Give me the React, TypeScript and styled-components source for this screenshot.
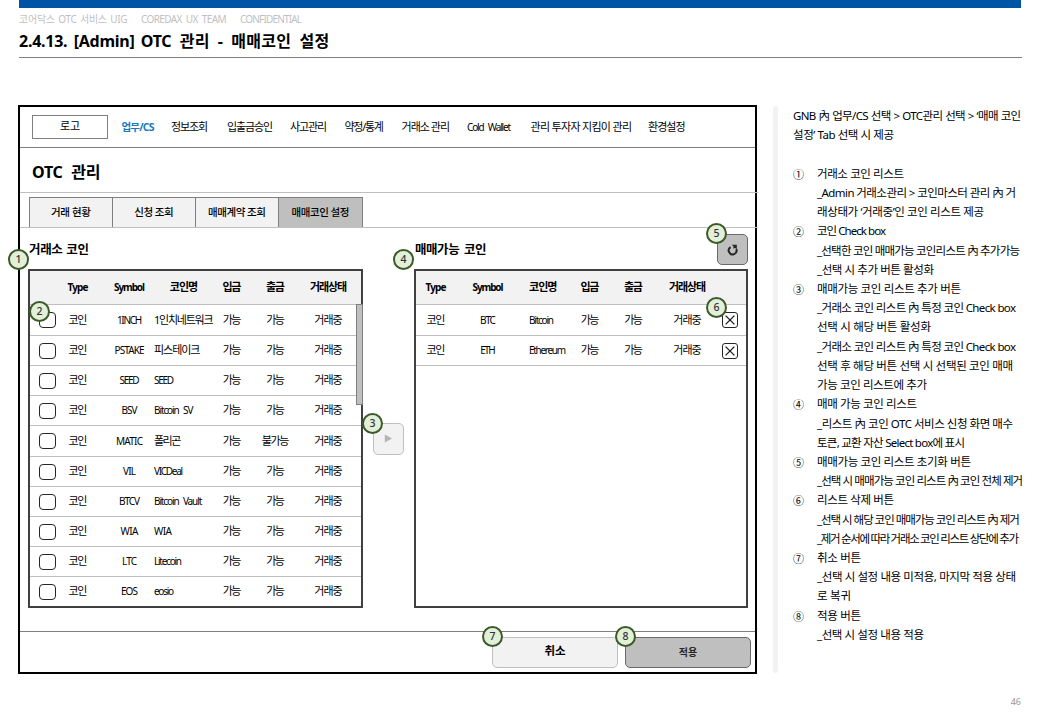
import React from "react";
import styled, { createGlobalStyle, css } from "styled-components";

const GlobalStyle = createGlobalStyle`
  * { box-sizing: border-box; }
  body {
    margin: 0;
    background: #fff;
    color: #000;
    font-family: "Noto Sans", "Noto Sans CJK KR", sans-serif;
    font-size: 11px;
  }
`;

const Slide = styled.div`
  width: 1040px;
  height: 720px;
  padding: 0 18px 0 19px;
  overflow: hidden;
  display: flex;
  flex-direction: column;
`;

const TopBar = styled.div`
  height: 8px;
  flex: none;
  width: 1002px;
  background: #0054a6;
`;

const Meta = styled.div`
  display: grid;
  grid-template-columns: 122px 99px 1fr;
  height: 21px;
  flex: none;
  line-height: 22px;
  font-size: 10px;
  color: #bfbfbf;
  white-space: nowrap;
`;

const Text = styled.span<{ $ls?: number; $ws?: number; $size?: number }>`
  letter-spacing: ${(p) => p.$ls ?? 0}px;
  word-spacing: ${(p) => p.$ws ?? 0}px;
  padding-right: ${(p) => Math.max(0, -(p.$ls ?? 0))}px;
  white-space: pre;
  ${(p) => p.$size && css`font-size: ${p.$size}px;`}
`;

const DocTitle = styled.h1`
  display: flex;
  margin: 0;
  height: 29px;
  flex: none;
  line-height: 24px;
  font-size: 16px;
  font-weight: 700;
  border-bottom: 1px solid #7f7f7f;
`;

const Main = styled.main`
  display: flex;
  margin: 47px 0 0 -1px;
  height: 569px;
  flex: none;
`;

const Frame = styled.section`
  width: 739px;
  height: 569px;
  flex: none;
  border: 2px solid #000;
  display: flex;
  flex-direction: column;
`;

const Gnb = styled.nav`
  display: grid;
  grid-template-columns: 89.5px 49.5px 56px 63px 54.5px 57px 65.5px 63.5px 117.5px 1fr;
  align-items: center;
  height: 41px;
  flex: none;
  padding-left: 12px;
  border-bottom: 1px solid #7f7f7f;
  white-space: nowrap;
`;

const Logo = styled.div`
  width: 76px;
  height: 24px;
  border: 1px solid #7f7f7f;
  text-align: center;
  line-height: 19px;
`;

const GnbItem = styled.span<{ $active?: boolean; $ls: number; $latin?: boolean }>`
  letter-spacing: ${(p) => p.$ls}px;
  line-height: 16px;
  margin-top: -1px;
  ${(p) => p.$latin && css`font-size: 10px; word-spacing: 3px;`}
  ${(p) => p.$active && css`font-size: 10.5px; font-weight: 700; color: #1878c4;`}
`;

const PageTitle = styled.h2`
  margin: 0 -3px 0 0;
  height: 45px;
  flex: none;
  padding-left: 12px;
  line-height: 48px;
  font-size: 16px;
  font-weight: 700;
  border-bottom: 1px solid #bfbfbf;
`;

const Tabs = styled.div`
  display: flex;
  height: 35px;
  flex: none;
  padding: 4px 0 0 9px;
  margin-right: -3px;
  border-bottom: 1px solid #bfbfbf;
`;

const Tab = styled.div<{ $active?: boolean }>`
  width: ${(p) => (p.$active ? 85 : 84)}px;
  margin-right: -1px;
  border: 1px solid #7f7f7f;
  border-bottom: 0;
  background: ${(p) => (p.$active ? "#bfbfbf" : "#f2f2f2")};
  text-align: center;
  line-height: 28px;
  font-size: 10.5px;
  font-weight: 500;
`;

const Panels = styled.div`
  display: flex;
  height: 404px;
  flex: none;
  padding-left: 8px;
  border-bottom: 1px solid #7f7f7f;
`;

const Panel = styled.div<{ $w: number }>`
  width: ${(p) => p.$w}px;
  flex: none;
`;

const PanelHead = styled.div`
  display: flex;
  justify-content: space-between;
  height: 41px;
  padding: 6px 0 0 1px;
  font-size: 12.5px;
  font-weight: 700;
  line-height: 31px;
`;

const Table = styled.div`
  position: relative;
  height: 339px;
  border: 2px solid #404040;
`;

const columns = {
  source: "27px 42px 55px 60px 36px 51px 55px",
  target: "40px 64px 52px 36px 51px 57px 28px",
};

const Row = styled.div<{ $kind: "source" | "target"; $h: number; $head?: boolean; $last?: boolean }>`
  display: grid;
  grid-template-columns: ${(p) => columns[p.$kind]};
  align-items: center;
  height: ${(p) => p.$h}px;
  line-height: 16px;
  white-space: nowrap;
  border-bottom: ${(p) => (p.$last ? 0 : 1)}px solid #bfbfbf;
  ${(p) => p.$head && css`background: #f2f2f2; font-weight: 700;`}
`;

const Cell = styled.div<{ $left?: boolean; $pad?: number }>`
  position: relative;
  display: flex;
  height: 100%;
  align-items: center;
  justify-content: ${(p) => (p.$left ? "flex-start" : "center")};
  padding: 0 0 1px ${(p) => p.$pad ?? 0}px;
`;

const CheckBox = styled.span`
  width: 17px;
  height: 16px;
  flex: none;
  margin-top: 1px;
  border: 1px solid #262626;
  border-radius: 4px;
  background: #fff;
`;

const RemoveBox = styled(CheckBox)`
  width: 16px;
  display: flex;
  align-items: center;
  justify-content: center;
  border-radius: 3px;
`;

const ScrollThumb = styled.div`
  position: absolute;
  right: -2px;
  top: 33px;
  width: 7px;
  height: 101px;
  background: #bfbfbf;
  border: 1px solid #7f7f7f;
`;

const Transfer = styled.div`
  width: 51px;
  flex: none;
  padding: 195px 0 0 10px;
`;

const IconButton = styled.div<{ $muted?: boolean }>`
  position: relative;
  width: 31px;
  height: ${(p) => (p.$muted ? 32 : 31)}px;
  flex: none;
  display: flex;
  align-items: center;
  justify-content: center;
  border-radius: 5px;
  border: 1px solid ${(p) => (p.$muted ? "#bfbfbf" : "#6a6a6a")};
  background: ${(p) => (p.$muted ? "#f2f2f2" : "#bfbfbf")};
`;

const Badge = styled.span<{ $x: number; $y: number }>`
  position: absolute;
  left: ${(p) => p.$x}px;
  top: ${(p) => p.$y}px;
  z-index: 2;
  width: 21px;
  height: 21px;
  border: 2px solid #3c5a2a;
  border-radius: 50%;
  background: #e2f0d9;
  color: #333;
  font-size: 10.5px;
  font-weight: 500;
  line-height: 16px;
  text-align: center;
`;

const Actions = styled.div`
  display: flex;
  flex: 1;
  justify-content: flex-end;
  gap: 7px;
  padding: 5px 4px 0 0;
`;

const ActionButton = styled.div<{ $primary?: boolean }>`
  position: relative;
  width: 126px;
  height: 31px;
  border-radius: 5px;
  text-align: center;
  border: 1px solid ${(p) => (p.$primary ? "#6a6a6a" : "#bfbfbf")};
  background: ${(p) => (p.$primary ? "#bfbfbf" : "#f2f2f2")};
  color: ${(p) => (p.$primary ? "#262626" : "#000")};
  line-height: ${(p) => (p.$primary ? 28 : 25)}px;
  font-size: ${(p) => (p.$primary ? 10 : 11.5)}px;
  font-weight: 700;
`;

const Divider = styled.div`
  width: 5px;
  height: 567px;
  margin: 1px 15px 0 16px;
  flex: none;
  border-radius: 3px;
  background: #f2f2f2;
`;

const Notes = styled.aside`
  width: 240px;
  flex: none;
  padding-top: 1px;
  font-size: 11.5px;
`;

const NoteLine = styled.div<{ $ls: number; $ws?: number }>`
  height: 19.22px;
  line-height: 19.22px;
  white-space: pre;
  letter-spacing: ${(p) => p.$ls}px;
  word-spacing: ${(p) => p.$ws ?? 0}px;
`;

const Intro = styled.div`
  padding-bottom: 19.22px;
`;

const Note = styled.div`
  display: grid;
  grid-template-columns: 24px 1fr;
`;

const NoteMark = styled.span`
  line-height: 21px;
  height: 19px;
  font-family: "Noto Sans CJK KR", sans-serif;
  font-size: 11px;
`;

const PageNumber = styled.div`
  margin-top: 19px;
  padding-right: 1px;
  text-align: right;
  font-size: 9px;
  line-height: 18px;
  font-weight: 500;
  color: #a6a6a6;
`;

type Piece = [text: string, spacing: number];
type Coin = { symbol: Piece; name: Piece; hangul?: boolean; out?: Piece };

const sourceCoins: Coin[] = [
  { symbol: ["1INCH", -1.3], name: ["1인치네트워크", -1.25], hangul: true },
  { symbol: ["PSTAKE", -0.9], name: ["피스테이크", -1.03], hangul: true },
  { symbol: ["SEED", -1.3], name: ["SEED", -1.3] },
  { symbol: ["BSV", -1], name: ["Bitcoin SV", -1.1] },
  { symbol: ["MATIC", -0.76], name: ["폴리곤", -1.5], hangul: true, out: ["불가능", -1.4] },
  { symbol: ["VIL", -0.8], name: ["VICDeal", -1.3] },
  { symbol: ["BTCV", -1.06], name: ["Bitcoin Vault", -1.12] },
  { symbol: ["WIA", -0.6], name: ["WIA", -0.6] },
  { symbol: ["LTC", -0.87], name: ["Litecoin", -1.24] },
  { symbol: ["EOS", -0.94], name: ["eosio", -1.28] },
];

const targetCoins: Coin[] = [
  { symbol: ["BTC", -1.2], name: ["Bitcoin", -1.22] },
  { symbol: ["ETH", -1.6], name: ["Ethereum", -1.3] },
];

const sourceHeights = [31, 30, 30, 30, 31, 30, 30, 30, 30, 29];

const menu: { label: Piece; active?: boolean; latin?: boolean }[] = [
  { label: ["업무/CS", -0.8], active: true },
  { label: ["정보조회", -1.16] },
  { label: ["입출금승인", -1.15] },
  { label: ["사고관리", -1.16] },
  { label: ["약정/통계", -1.27] },
  { label: ["거래소 관리", -0.99] },
  { label: ["Cold Wallet", -1.18], latin: true },
  { label: ["관리 투자자 지킴이 관리", -0.69] },
  { label: ["환경설정", -0.99] },
];

const tabs: Piece[] = [
  ["거래 현황", -0.34],
  ["신청 조회", -0.5],
  ["매매계약 조회", -0.45],
  ["매매코인 설정", -0.45],
];

type Line = [text: string, spacing: number, word?: number];

const intro: Line[] = [
  ["GNB 內 업무/CS 선택 > OTC관리 선택 > ‘매매 코인", -0.62, 0.4],
  ["설정’ Tab 선택 시 제공", -0.43],
];

const notes: { mark: string; lines: Line[] }[] = [
  {
    mark: "①",
    lines: [
      ["거래소 코인 리스트", -0.4],
      ["_Admin 거래소관리 > 코인마스터 관리 內 거", -0.57],
      ["래상태가 ‘거래중’인 코인 리스트 제공", -0.38],
    ],
  },
  {
    mark: "②",
    lines: [
      ["코인 Check box", -0.96],
      ["_선택한 코인 매매가능 코인리스트 內 추가가능", -0.79],
      ["_선택 시 추가 버튼 활성화", -0.42],
    ],
  },
  {
    mark: "③",
    lines: [
      ["매매가능 코인 리스트 추가 버튼", -0.34],
      ["_거래소 코인 리스트 內 특정 코인 Check box", -0.64],
      ["선택 시 해당 버튼 활성화", -0.29],
      ["_거래소 코인 리스트 內 특정 코인 Check box", -0.64],
      ["선택 후 해당 버튼 선택 시 선택된 코인 매매", -0.32],
      ["가능 코인 리스트에 추가", -0.4],
    ],
  },
  {
    mark: "④",
    lines: [
      ["매매 가능 코인 리스트", -0.38],
      ["_리스트 內 코인 OTC 서비스 신청 화면 매수", -0.47],
      ["토큰, 교환 자산 Select box에 표시", -0.74],
    ],
  },
  {
    mark: "⑤",
    lines: [
      ["매매가능 코인 리스트 초기화 버튼", -0.36],
      ["_선택 시 매매가능 코인 리스트 內 코인 전체 제거", -0.92],
    ],
  },
  {
    mark: "⑥",
    lines: [
      ["리스트 삭제 버튼", -0.38],
      ["_선택 시 해당 코인 매매가능 코인 리스트 內 제거", -1.04],
      ["_제거 순서에 따라 거래소 코인 리스트 상단에 추가", -1.32],
    ],
  },
  {
    mark: "⑦",
    lines: [
      ["취소 버튼", -0.33],
      ["_선택 시 설정 내용 미적용, 마지막 적용 상태", -0.4],
      ["로 복귀", -0.24],
    ],
  },
  {
    mark: "⑧",
    lines: [
      ["적용 버튼", -0.33],
      ["_선택 시 설정 내용 적용", -0.41],
    ],
  },
];

function CoinCells({ coin, namePad = 0, symbolPad = 0 }: { coin: Coin; namePad?: number; symbolPad?: number }) {
  return (
    <>
      <Cell><Text $ls={-1.25}>코인</Text></Cell>
      <Cell $pad={symbolPad}><Text $size={10} $ls={coin.symbol[1]}>{coin.symbol[0]}</Text></Cell>
      <Cell $left $pad={namePad}>
        <Text $size={coin.hangul ? 11 : 10} $ws={3} $ls={coin.name[1]}>{coin.name[0]}</Text>
      </Cell>
      <Cell><Text $ls={-1.5}>가능</Text></Cell>
      <Cell><Text $ls={coin.out ? coin.out[1] : -1.5}>{coin.out ? coin.out[0] : "가능"}</Text></Cell>
      <Cell><Text $ls={-0.94}>거래중</Text></Cell>
    </>
  );
}

function HeadCells({ namePad = 0, symbolPad = 0, left }: { namePad?: number; symbolPad?: number; left?: boolean }) {
  return (
    <>
      <Cell><Text $size={10} $ls={-0.86}>Type</Text></Cell>
      <Cell $pad={symbolPad}><Text $size={10} $ls={-1.11}>Symbol</Text></Cell>
      <Cell $left={left} $pad={namePad}><Text $ls={-0.94}>코인명</Text></Cell>
      <Cell><Text $ls={-1.25}>입금</Text></Cell>
      <Cell><Text $ls={-1.25}>출금</Text></Cell>
      <Cell><Text $ls={-1.16}>거래상태</Text></Cell>
    </>
  );
}

export default function App() {
  return (
    <Slide>
      <GlobalStyle />
      <TopBar />
      <Meta>
        <Text $ls={-0.25} $ws={1}>코어닥스 OTC 서비스 UIG</Text>
        <Text $ls={-0.6} $ws={2}>COREDAX UX TEAM</Text>
        <Text $ls={-0.83}>CONFIDENTIAL</Text>
      </Meta>
      <DocTitle>
        <Text $ls={-0.25} $ws={2.4}>2.4.13. [Admin] OTC</Text>
        <Text $ls={0.3} $ws={3.6}> 관리 - 매매코인 설정</Text>
      </DocTitle>

      <Main>
        <Frame>
          <Gnb>
            <Logo>로고</Logo>
            {menu.map((m) => (
              <GnbItem key={m.label[0]} $ls={m.label[1]} $active={m.active} $latin={m.latin}>
                {m.label[0]}
              </GnbItem>
            ))}
          </Gnb>
          <PageTitle><Text $ls={-0.3} $ws={5}>OTC 관리</Text></PageTitle>
          <Tabs>
            {tabs.map(([label, ls], i) => (
              <Tab key={label} $active={i === 3}><Text $ls={ls}>{label}</Text></Tab>
            ))}
          </Tabs>

          <Panels>
            <Panel $w={335}>
              <PanelHead><Text $ls={-0.35} $ws={1}>거래소 코인</Text></PanelHead>
              <Table>
                <Badge $x={-22} $y={-22}>1</Badge>
                <Row $kind="source" $h={34} $head>
                  <Cell />
                  <HeadCells symbolPad={6} />
                </Row>
                {sourceCoins.map((coin, i) => (
                  <Row key={coin.symbol[0]} $kind="source" $h={sourceHeights[i]} $last={i === 9}>
                    <Cell $left $pad={9}>
                      <CheckBox />
                      {i === 0 && <Badge $x={-1} $y={-4}>2</Badge>}
                    </Cell>
                    <CoinCells coin={coin} symbolPad={6} />
                  </Row>
                ))}
                <ScrollThumb />
              </Table>
            </Panel>

            <Transfer>
              <IconButton $muted>
                <Badge $x={-12} $y={-11}>3</Badge>
                <svg width="10" height="10" viewBox="0 0 10 10">
                  <path d="M0.8 0.6 L8 4.6 L0.8 8.6 Z" fill="#b4b4b4" />
                </svg>
              </IconButton>
            </Transfer>

            <Panel $w={334}>
              <PanelHead>
                <Text $ls={-0.45} $ws={2}>매매가능 코인</Text>
                <IconButton>
                  <Badge $x={-12} $y={-12}>5</Badge>
                  <svg width="12" height="12" viewBox="0 0 12 12" fill="none" stroke="#262626">
                    <path d="M3.6 3.2 A3.9 3.9 0 1 0 9.3 5.2" strokeWidth="2" />
                    <path d="M4.8 0.8 L9.8 0.8 L9.8 5.4 L8.2 4 L6.2 4.6 L6.6 2.4 Z" fill="#262626" stroke="none" />
                  </svg>
                </IconButton>
              </PanelHead>
              <Table>
                <Badge $x={-23} $y={-22}>4</Badge>
                <Row $kind="target" $h={34} $head>
                  <HeadCells left namePad={9} />
                </Row>
                {targetCoins.map((coin, i) => (
                  <Row key={coin.symbol[0]} $kind="target" $h={31 - i}>
                    <CoinCells coin={coin} namePad={9} />
                    <Cell>
                      <RemoveBox>
                        <svg width="10" height="10" viewBox="0 0 10 10" stroke="#1a1a1a" strokeWidth="1.3">
                          <path d="M0.6 0.6 L9.4 9.4 M9.4 0.6 L0.6 9.4" />
                        </svg>
                      </RemoveBox>
                      {i === 0 && <Badge $x={-10} $y={-8}>6</Badge>}
                    </Cell>
                  </Row>
                ))}
              </Table>
            </Panel>
          </Panels>

          <Actions>
            <ActionButton>
              <Badge $x={-11} $y={-12}>7</Badge>취소
            </ActionButton>
            <ActionButton $primary>
              <Badge $x={-11} $y={-12}>8</Badge>적용
            </ActionButton>
          </Actions>
        </Frame>

        <Divider />

        <Notes>
          <Intro>
            {intro.map(([text, ls, ws]) => (
              <NoteLine key={text} $ls={ls} $ws={ws}>{text}</NoteLine>
            ))}
          </Intro>
          {notes.map((n) => (
            <Note key={n.mark}>
              <NoteMark>{n.mark}</NoteMark>
              <div>
                {n.lines.map(([text, ls, ws], i) => (
                  <NoteLine key={i} $ls={ls} $ws={ws}>{text}</NoteLine>
                ))}
              </div>
            </Note>
          ))}
        </Notes>
      </Main>
      <PageNumber>46</PageNumber>
    </Slide>
  );
}
